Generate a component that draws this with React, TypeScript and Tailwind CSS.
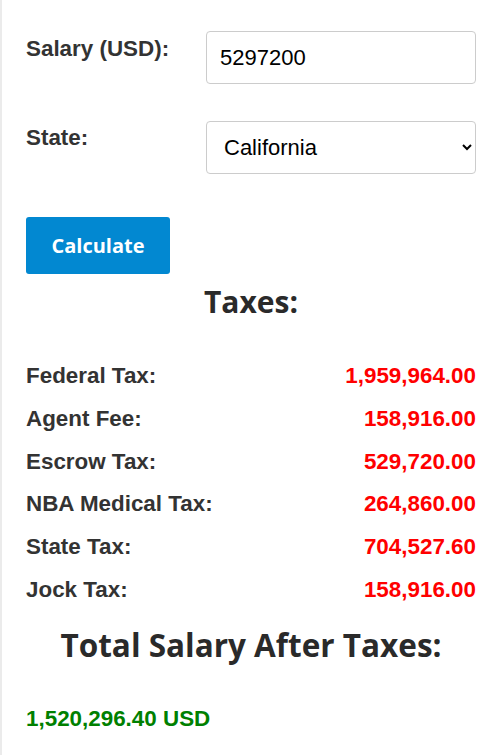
import React from "react";

const rows: [string, string][] = [
  ["Federal Tax:", "1,959,964.00"],
  ["Agent Fee:", "158,916.00"],
  ["Escrow Tax:", "529,720.00"],
  ["NBA Medical Tax:", "264,860.00"],
  ["State Tax:", "704,527.60"],
  ["Jock Tax:", "158,916.00"],
];

export default function App() {
  return (
    <div className="min-h-[755px] w-[499px] bg-white border-l-2 border-[#ebebeb]">
      <div className="pl-[24px] pr-[23px] pt-[31px] font-['Liberation_Sans',Arial,sans-serif] text-[#333]">
        <div className="flex items-start">
          <label className="w-[180px] pt-[5px] text-[22.4px] font-bold leading-[25px]">Salary (USD):</label>
          <input
            defaultValue="5297200"
            className="h-[53px] w-[270px] rounded-[4px] border border-[#cccccc] px-[13px] text-[22px] text-black outline-none"
          />
        </div>
        <div className="mt-[37px] flex items-start">
          <label className="w-[180px] pt-[4px] text-[22.4px] font-bold leading-[25px]">State:</label>
          <select
            defaultValue="California"
            className="h-[53px] w-[270px] rounded-[4px] border border-[#cccccc] bg-white px-[13px] text-[22px] text-black outline-none"
          >
            <option>California</option>
            <option>Texas</option>
          </select>
        </div>
        <button className="mt-[43px] h-[57px] w-[144px] rounded-[3px] bg-[#0288d1] font-['Open_Sans',sans-serif] text-[20px] font-bold text-white">
          Calculate
        </button>
        <h2 className="mt-[8px] text-center font-['Open_Sans',sans-serif] text-[30px] font-bold leading-[40px] text-[#2a2a2a]">
          Taxes:
        </h2>
        <div className="mt-[41px] flex flex-col">
          {rows.map(([k, v]) => (
            <div key={k} className="flex h-[42.8px] items-start justify-between text-[22.4px] font-bold leading-[25px]">
              <span>{k}</span>
              <span className="text-[#ff0000]">{v}</span>
            </div>
          ))}
        </div>
        <h2 className="mt-[3px] text-center font-['Open_Sans',sans-serif] text-[31.5px] font-bold leading-[44px] text-[#2a2a2a]">
          Total Salary After Taxes:
        </h2>
        <div className="mt-[39px] text-[22.4px] font-bold leading-[25px] text-[#008000]">1,520,296.40 USD</div>
      </div>
    </div>
  );
}
